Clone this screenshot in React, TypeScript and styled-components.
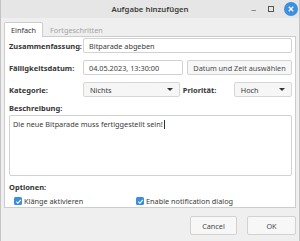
import React from 'react'
import styled, { createGlobalStyle } from 'styled-components'

const GlobalStyle = createGlobalStyle`
  html, body {
    margin: 0;
    padding: 0;
    background: #efefef;
  }
  body {
    font-family: "Noto Sans", "DejaVu Sans", sans-serif;
    font-size: 7.3px;
    color: #333;
  }
`

const Window = styled.div`
  width: 300px;
  height: 241px;
  box-sizing: border-box;
  display: flex;
  flex-direction: column;
  background: #efefef;
  border-left: 1px solid #c4c4c4;
  border-right: 1px solid #c4c4c4;
  overflow: hidden;
`

const TitleBar = styled.div`
  height: 18px;
  flex-shrink: 0;
  display: grid;
  grid-template-columns: 1fr auto 1fr;
  align-items: center;
  background: #e6e6e6;
`

const Title = styled.div`
  grid-column: 2;
  font-weight: 600;
  font-size: 7.8px;
  color: #3c3c3c;
`

const Controls = styled.div`
  grid-column: 3;
  justify-self: end;
  display: flex;
  align-items: center;
  gap: 9px;
  padding-right: 1px;
`

const CloseButton = styled.div`
  width: 14px;
  height: 14px;
  border-radius: 50%;
  background: #3d8fe0;
  display: flex;
  align-items: center;
  justify-content: center;
`

const Body = styled.div`
  flex: 1;
  display: flex;
  flex-direction: column;
  padding: 4px 3px 4px 3px;
`

const TabBar = styled.div`
  display: flex;
  align-items: flex-end;
  height: 15px;
  margin-bottom: -1px;
  position: relative;
  z-index: 1;
`

const Tab = styled.div<{ $active?: boolean }>`
  height: 15px;
  box-sizing: border-box;
  display: flex;
  align-items: center;
  padding: 0 6px;
  background: ${({ $active }) => ($active ? '#fff' : 'transparent')};
  border: 1px solid ${({ $active }) => ($active ? '#cdcdcd' : 'transparent')};
  border-bottom: none;
  border-radius: 2px 2px 0 0;
  color: ${({ $active }) => ($active ? '#333' : '#a3a3a3')};
`

const Panel = styled.div`
  height: 172px;
  box-sizing: border-box;
  background: #fff;
  border: 1px solid #cdcdcd;
  padding: 1px 3px 0 4px;
  display: flex;
  flex-direction: column;
`

const Form = styled.div`
  display: flex;
  flex-direction: column;
  gap: 7px;
`

const Row = styled.div`
  display: flex;
  align-items: center;
  height: 15px;
`

const Label = styled.div<{ $width?: number }>`
  width: ${({ $width }) => ($width ? `${$width}px` : 'auto')};
  flex-shrink: 0;
  font-weight: 700;
  font-size: 7.5px;
  color: #353535;
`

const Input = styled.div<{ $width?: number }>`
  height: 15px;
  box-sizing: border-box;
  ${({ $width }) => ($width ? `width: ${$width}px;` : 'flex: 1;')}
  display: flex;
  align-items: center;
  padding: 0 5px;
  border: 1px solid #d2d2d2;
  border-radius: 2px;
  background: #fff;
  color: #3a3a3a;
`

const Button = styled.div<{ $width?: number }>`
  height: ${({ $width }) => ($width ? '19px' : '15px')};
  box-sizing: border-box;
  ${({ $width }) => ($width ? `width: ${$width}px;` : 'flex: 1;')}
  display: flex;
  align-items: center;
  justify-content: center;
  border: 1px solid #d2d2d2;
  border-radius: 2px;
  background: #f7f7f7;
  color: #4a4a4a;
`

const Combo = styled.div<{ $width: number }>`
  height: 15px;
  width: ${({ $width }) => $width}px;
  box-sizing: border-box;
  display: flex;
  align-items: center;
  justify-content: space-between;
  padding: 0 6px 0 6px;
  border: 1px solid #d6d6d6;
  border-radius: 2px;
  background: #f6f6f6;
  color: #3a3a3a;
`

const Arrow = styled.div`
  width: 0;
  height: 0;
  border-left: 3px solid transparent;
  border-right: 3px solid transparent;
  border-top: 3.5px solid #333;
`

const SectionLabel = styled(Label)`
  margin-top: 5px;
  height: 11px;
  display: flex;
  align-items: center;
`

const TextArea = styled.div`
  margin-top: 2px;
  height: 62px;
  box-sizing: border-box;
  border: 1px solid #d2d2d2;
  border-radius: 2px;
  padding: 3px 3px;
  color: #3a3a3a;
`

const Caret = styled.span`
  display: inline-block;
  width: 1px;
  height: 9px;
  background: #333;
  vertical-align: -2px;
  margin-left: 1px;
`

const OptionsRow = styled.div`
  display: grid;
  grid-template-columns: 122px 1fr;
  padding-left: 5px;
  margin-top: 3px;
  height: 12px;
  align-items: center;
`

const Check = styled.label`
  display: flex;
  align-items: center;
  gap: 2px;
  color: #3a3a3a;
`

const CheckBox = styled.span`
  width: 8px;
  height: 8px;
  border-radius: 1.5px;
  background: #3a8ee0;
  display: flex;
  align-items: center;
  justify-content: center;
`

const Footer = styled.div`
  display: flex;
  justify-content: flex-end;
  gap: 10px;
  margin-top: 8px;
  padding-right: 0;
`

const CheckMark = () => (
  <svg width="7" height="7" viewBox="0 0 8 8">
    <path d="M1.5 4.2 L3.3 6 L6.6 2.2" fill="none" stroke="#fff" strokeWidth="1.3" />
  </svg>
)

export default function App() {
  return (
    <>
      <GlobalStyle />
      <Window>
        <TitleBar>
          <Title>Aufgabe hinzufügen</Title>
          <Controls>
            <svg width="8" height="8" viewBox="0 0 8 8">
              <path d="M1.5 5.5 H6" stroke="#8a8a8a" strokeWidth="1" />
            </svg>
            <svg width="8" height="8" viewBox="0 0 8 8">
              <rect x="1.5" y="1.5" width="5" height="5" fill="none" stroke="#555" strokeWidth="1" />
            </svg>
            <CloseButton>
              <svg width="8" height="8" viewBox="0 0 8 8">
                <path d="M1.8 1.8 L6.2 6.2 M6.2 1.8 L1.8 6.2" stroke="#fff" strokeWidth="1.3" />
              </svg>
            </CloseButton>
          </Controls>
        </TitleBar>
        <Body>
          <TabBar>
            <Tab $active>Einfach</Tab>
            <Tab>Fortgeschritten</Tab>
          </TabBar>
          <Panel>
            <Form>
              <Row>
                <Label $width={74}>Zusammenfassung:</Label>
                <Input>Bitparade abgeben</Input>
              </Row>
              <Row>
                <Label $width={74}>Fälligkeitsdatum:</Label>
                <Input $width={100}>04.05.2023, 13:30:00</Input>
                <div style={{ width: 4 }} />
                <Button>Datum und Zeit auswählen</Button>
              </Row>
              <Row>
                <Label $width={74}>Kategorie:</Label>
                <Combo $width={100}>
                  Nichts
                  <Arrow />
                </Combo>
                <Label $width={51} style={{ paddingLeft: 3 }}>
                  Priorität:
                </Label>
                <Combo $width={60}>
                  Hoch
                  <Arrow />
                </Combo>
              </Row>
            </Form>
            <SectionLabel>Beschreibung:</SectionLabel>
            <TextArea>
              Die neue Bitparade muss fertiggestellt sein!
              <Caret />
            </TextArea>
            <SectionLabel>Optionen:</SectionLabel>
            <OptionsRow>
              <Check>
                <CheckBox>
                  <CheckMark />
                </CheckBox>
                Klänge aktivieren
              </Check>
              <Check>
                <CheckBox>
                  <CheckMark />
                </CheckBox>
                Enable notification dialog
              </Check>
            </OptionsRow>
          </Panel>
          <Footer>
            <Button $width={47}>Cancel</Button>
            <Button $width={49}>OK</Button>
          </Footer>
        </Body>
      </Window>
    </>
  )
}
